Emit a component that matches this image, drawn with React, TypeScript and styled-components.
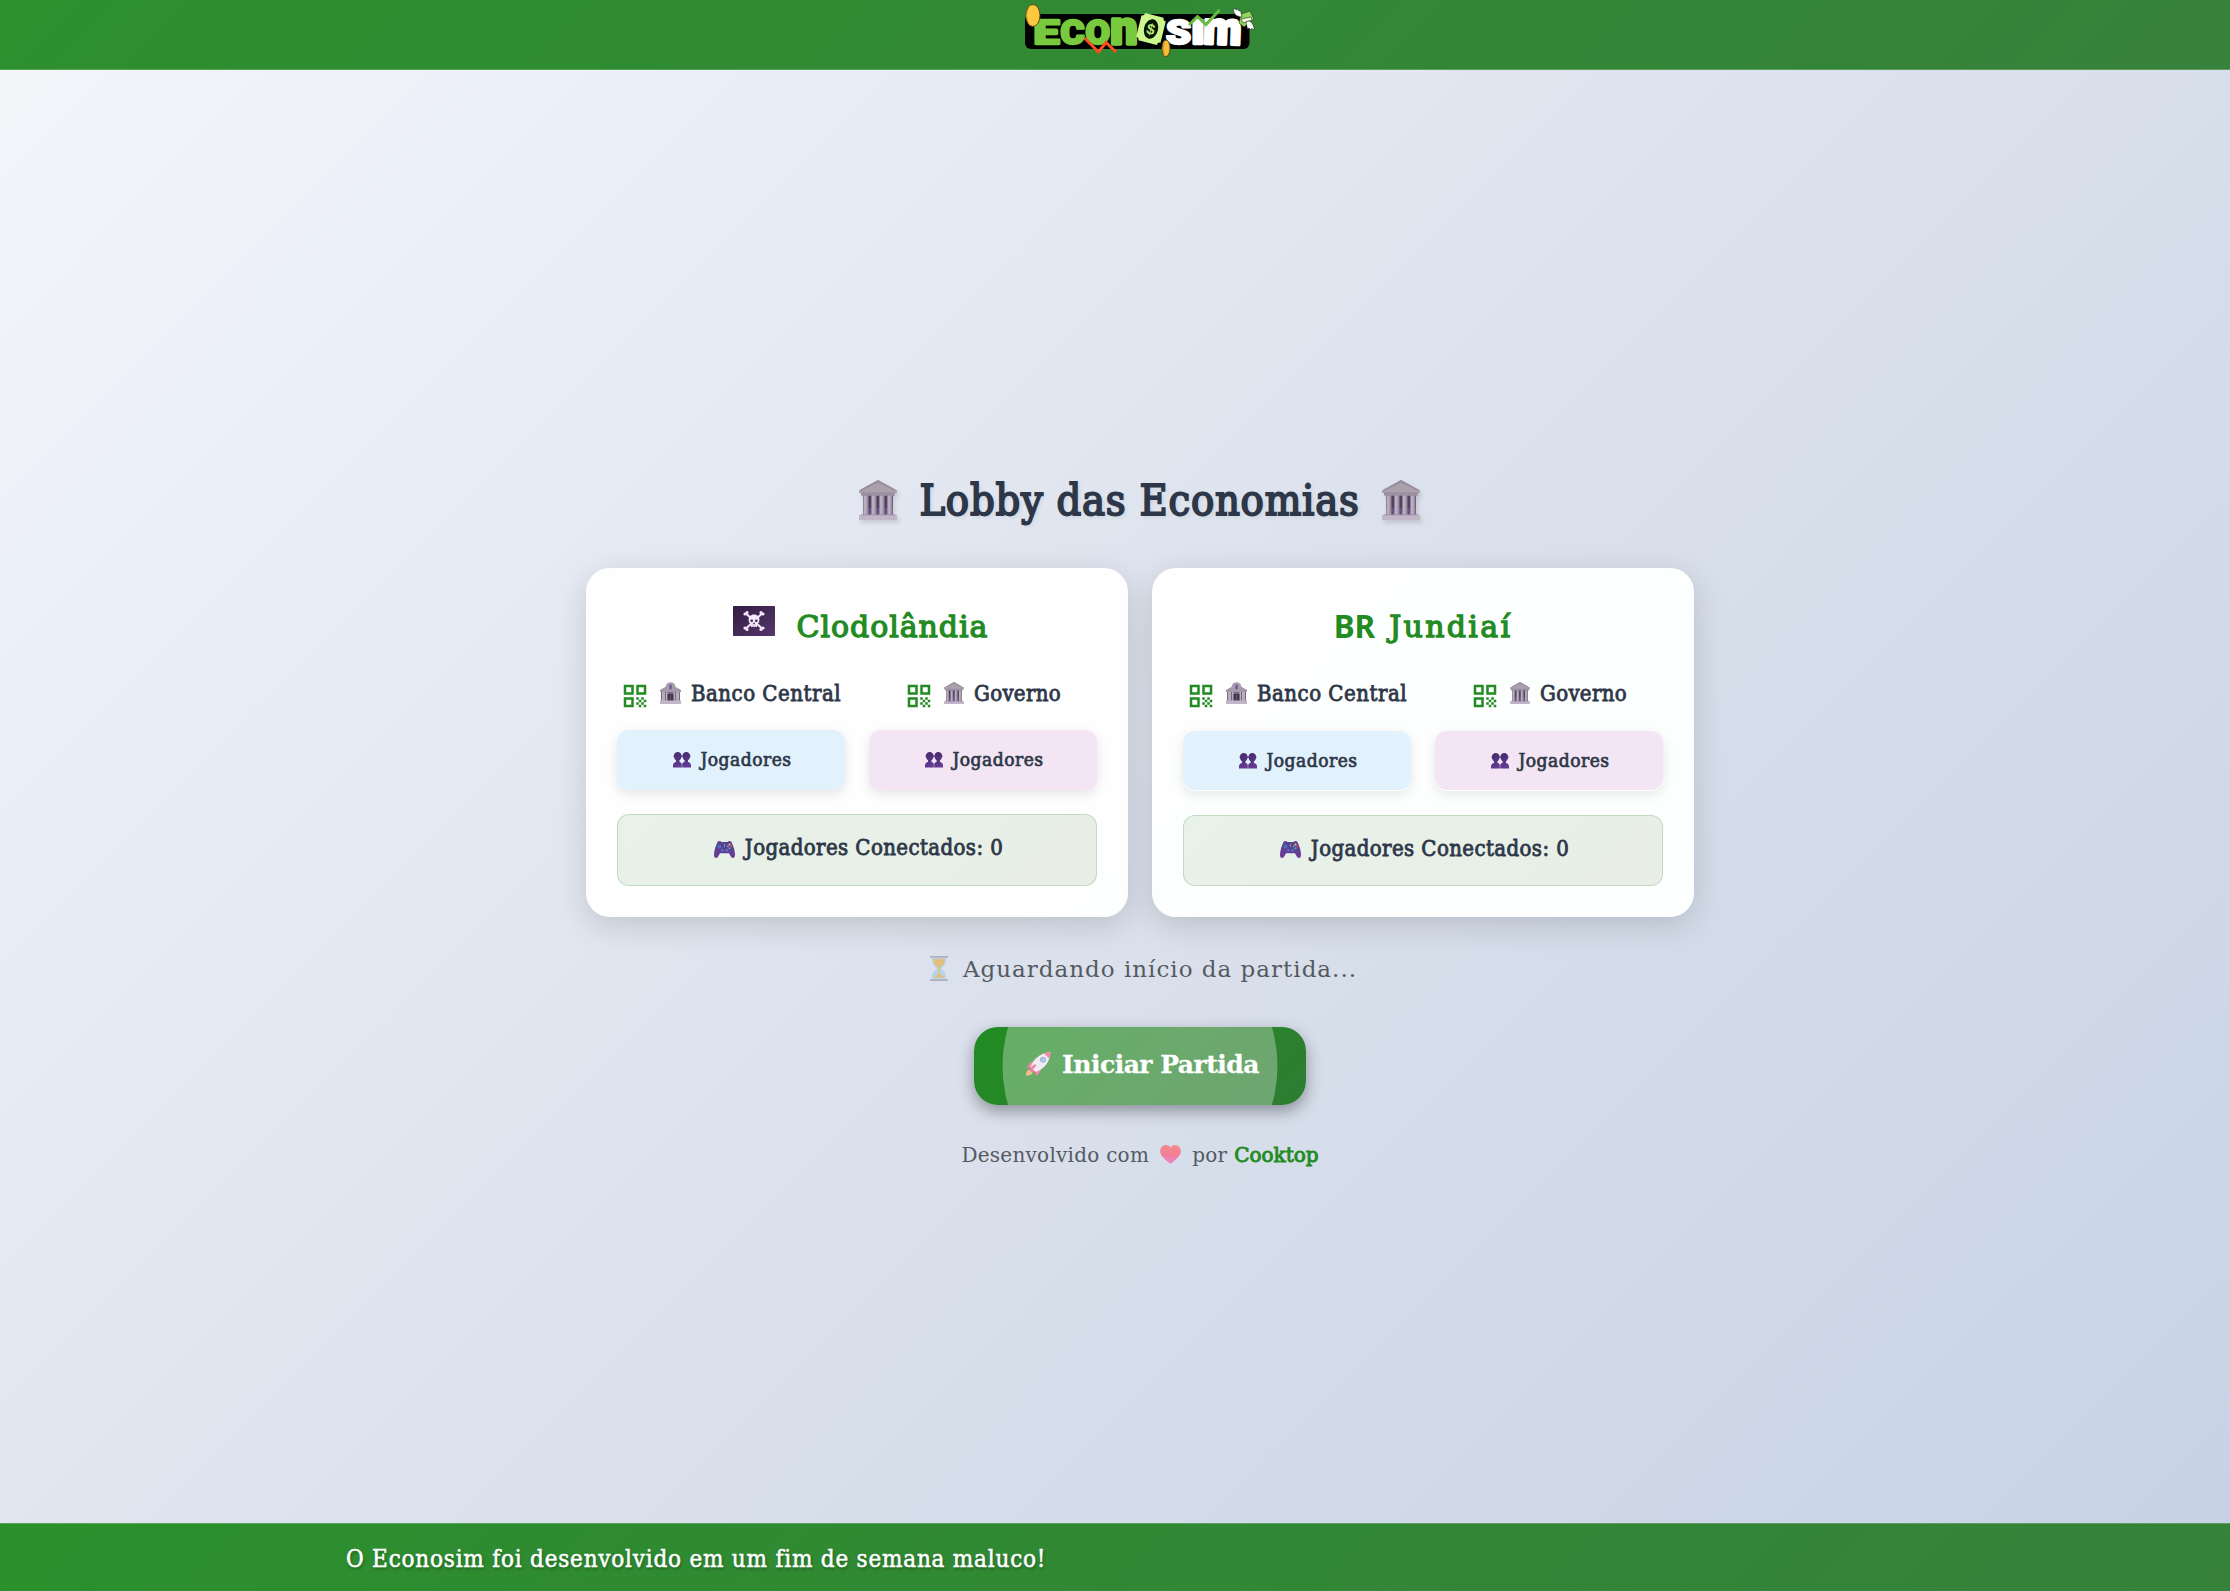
import React from "react";
import styled, { createGlobalStyle } from "styled-components";

const GlobalStyle = createGlobalStyle`
  * { box-sizing: border-box; }
  body {
    margin: 0;
    background: #dce3ee;
    font-family: "DejaVu Serif", "Liberation Serif", serif;
  }
`;

const Page = styled.div`
  display: flex;
  flex-direction: column;
  height: 1591px;
  background: linear-gradient(135deg, #f4f6f9 0%, #ebeff8 18%, #dce2ed 50%, #c6d2e4 100%);
`;

const barFill = "linear-gradient(135deg, rgba(34, 139, 34, 0.95), rgba(46, 125, 50, 0.95))";

const Header = styled.header`
  display: flex;
  justify-content: center;
  height: 70px;
  padding-left: 50px;
  background: ${barFill};
  border-bottom: 1px solid rgba(255, 255, 255, 0.2);
`;

const Main = styled.main`
  flex: 1;
  display: flex;
  flex-direction: column;
  align-items: center;
  padding: 401px 0 0 50px;
`;

const Footer = styled.footer`
  display: flex;
  align-items: center;
  height: 68px;
  padding: 2px 0 0 346px;
  background: ${barFill};
  border-top: 1px solid rgba(255, 255, 255, 0.2);
  color: #fff;
  text-shadow: 1px 2px 3px rgba(0, 0, 0, 0.35);
`;

const Type = styled.span<{
  $size: number;
  $spacing?: number;
  $ink?: number;
  $narrow?: boolean;
  $bold?: boolean;
}>`
  padding-top: 2px;
  font-family: ${(p) => (p.$narrow ? '"DejaVu Serif Condensed", ' : "")}"DejaVu Serif", serif;
  font-size: ${(p) => p.$size}px;
  font-weight: ${(p) => (p.$bold ? 700 : 400)};
  letter-spacing: ${(p) => p.$spacing ?? 0}px;
  -webkit-text-stroke: ${(p) => p.$ink ?? 0}px currentColor;
  line-height: 1.2;
  white-space: nowrap;
`;

const Title = styled.h1`
  display: flex;
  align-items: center;
  gap: 22px;
  height: 58px;
  margin: 0 0 39px;
  padding-right: 1px;
  color: #2d3748;
  text-shadow: 2px 2px 4px rgba(0, 0, 0, 0.1);

  svg {
    margin-bottom: 1px;
    filter: drop-shadow(2px 3px 2px rgba(0, 0, 0, 0.12));
  }
`;

const Cards = styled.div`
  display: flex;
  gap: 24px;
`;

const Card = styled.section`
  width: 542px;
  height: 349px;
  padding: 33px 31px 31px;
  border-radius: 24px;
  background: rgba(255, 255, 255, 0.95);
  box-shadow: 0 8px 32px rgba(0, 0, 0, 0.15);
`;

const CardTitle = styled.h2<{ $gap: number }>`
  display: flex;
  align-items: center;
  justify-content: center;
  gap: ${(p) => p.$gap}px;
  height: 50px;
  margin: 0 0 27px;
  color: #228b22;

  svg { margin: 0 0 10px 7px; }
`;

const FlagLetters = styled.span`
  font: 700 31.5px/1 "Noto Sans", "Open Sans", sans-serif;
`;

const Columns = styled.div`
  display: grid;
  grid-template-columns: 228px 228px;
  gap: 24px;
`;

const RoleRow = styled(Columns)<{ $low: boolean }>`
  margin-bottom: ${(p) => (p.$low ? 23 : 22)}px;
`;

const Role = styled.div`
  display: flex;
  align-items: center;
  justify-content: center;
  gap: 10px;
  height: 30px;
  padding-right: 1px;
  color: #2d3748;
`;

const QrIcon = styled.svg`
  width: 30px;
  height: 30px;
  margin-top: 5px;
  fill: #228b22;
  flex: none;
`;

const Players = styled.div<{ $tone: string; $low: boolean }>`
  display: flex;
  align-items: center;
  justify-content: center;
  gap: 9px;
  height: ${(p) => (p.$low ? 59 : 60)}px;
  padding: 0 0 3px 3px;
  border-radius: 12px;
  background: ${(p) => p.$tone};
  color: #2d3748;
  box-shadow: ${(p) => (p.$low ? "0 1px 0 #fff, " : "")}0 4px 12px rgba(0, 0, 0, 0.1);

  svg { margin-top: 3px; }
`;

const Connected = styled.div<{ $low: boolean }>`
  display: flex;
  align-items: center;
  justify-content: center;
  gap: 10px;
  height: ${(p) => (p.$low ? 71 : 72)}px;
  margin-top: ${(p) => (p.$low ? 25 : 24)}px;
  padding: 0 0 5px 3px;
  border: 1px solid rgba(34, 139, 34, 0.2);
  border-radius: 12px;
  background: linear-gradient(135deg, #e8f2e9, #e8eee6);
  color: #2d3748;

  svg { margin-top: 3px; }
`;

const Waiting = styled.p`
  display: flex;
  align-items: center;
  gap: 15px;
  height: 30px;
  margin: 37px 0 43px 7px;
  color: #555a60;

  svg { margin-bottom: 1px; }
`;

const StartButton = styled.button`
  position: relative;
  display: flex;
  align-items: center;
  justify-content: center;
  gap: 11px;
  width: 332px;
  height: 78px;
  padding: 0 0 5px 5px;
  overflow: hidden;
  border: 0;
  border-radius: 24px;
  background: linear-gradient(135deg, #228b22, #2e7d32);
  box-shadow: 0 6px 16px rgba(0, 0, 0, 0.36);
  color: #fff;

  &::after {
    content: "";
    position: absolute;
    top: 50%;
    left: 50%;
    width: 275px;
    height: 275px;
    border-radius: 50%;
    transform: translate(-50%, -50%);
    background: rgba(255, 255, 255, 0.31);
  }
`;

const Credits = styled.p`
  display: flex;
  align-items: center;
  gap: 11px;
  height: 30px;
  margin: 34px 0 0;
  color: #555a60;
`;

const Author = styled.span`
  margin-left: -4px;
  color: #228b22;
  display: flex;
`;

function Temple({ width, height }: { width: number; height: number }) {
  return (
    <svg width={width} height={height} viewBox="0 0 38 46" preserveAspectRatio="none">
      <rect x="4" y="15" width="30" height="27" fill="#51405f" />
      <rect x="4" y="32" width="30" height="10" fill="#694c80" />
      {[5, 13, 21, 29].map((x) => (
        <g key={x}>
          <rect x={x - 0.6} y="17" width="4.8" height="24" fill="#b9aebf" />
          <rect x={x + 2.6} y="17" width="1.6" height="24" fill="#998ca1" />
        </g>
      ))}
      <path d="M19 0 38 12v3H0v-3z" fill="#aaa1ac" />
      <path d="M19 0 38 12h-3L19 3 3 12H0z" fill="#978c9c" />
      <rect x="2" y="14" width="34" height="4" rx="1" fill="#9b90a1" />
      <rect x="0" y="40" width="38" height="6" rx="0.6" fill="#c0b6c8" />
      <path d="M2 40h34" stroke="#91869a" strokeWidth="0.8" />
    </svg>
  );
}

function Bank() {
  return (
    <svg width="21" height="22" viewBox="0 0 21 22">
      <path d="M1 7h19v12H1z" fill="#776b81" />
      <path d="M0 8 10.5 2 21 8v2H0z" fill="#a298a6" />
      <path d="M2 10h3v9H2zM16 10h3v9h-3zM6 10h1.6v9H6zM13.4 10H15v9h-1.6z" fill="#b8adbd" />
      <rect x="7.6" y="12" width="5.8" height="7" fill="#44364d" />
      <path d="M10.5 13v6" stroke="#786a80" strokeWidth="0.7" />
      <circle cx="10.5" cy="5" r="4.8" fill="#a79dab" />
      <rect x="9.4" y="2.4" width="2.3" height="5" rx="1" fill="#7052a0" />
      <path d="M0 18.5h21V22H0z" fill="#c0b6c8" />
    </svg>
  );
}

function PirateFlag() {
  return (
    <svg width="42" height="30" viewBox="0 0 42 30">
      <defs>
        <linearGradient id="flagCloth" x1="0" y1="0" x2="1" y2="1">
          <stop offset="0" stopColor="#321c43" />
          <stop offset="1" stopColor="#56376b" />
        </linearGradient>
      </defs>
      <rect width="42" height="30" rx="0.8" fill="url(#flagCloth)" />
      <g stroke="#f3e9fb" strokeWidth="2" fill="#f3e9fb">
        <path d="m13 7.500 16 15M29 7.500l-16 15" />
        <g stroke="none">
          <circle cx="12" cy="8" r="1.600" /><circle cx="14" cy="6.500" r="1.600" />
          <circle cx="30" cy="8" r="1.600" /><circle cx="28" cy="6.500" r="1.600" />
          <circle cx="12" cy="22" r="1.600" /><circle cx="14" cy="23.500" r="1.600" />
          <circle cx="30" cy="22" r="1.600" /><circle cx="28" cy="23.500" r="1.600" />
        </g>
      </g>
      <path d="M21 8.500c-3.600 0-5.400 2.400-5.400 5.500 0 2.200.9 3.200 2.300 4V21h6.200v-3c1.400-.8 2.300-1.800 2.300-4 0-3.100-1.800-5.500-5.400-5.500z" fill="#f3e9fb" />
      <circle cx="18.700" cy="14.800" r="1.300" fill="#3d244f" />
      <circle cx="23.300" cy="14.800" r="1.300" fill="#3d244f" />
      <path d="m21 16.500.8 1.600h-1.600zM19.800 19.500V21M22.200 19.500V21" fill="#3d244f" stroke="#3d244f" strokeWidth="0.400" />
    </svg>
  );
}

function Busts() {
  return (
    <svg width="18" height="16" viewBox="0 0 18 16">
      <defs>
        <linearGradient id="bust" x1="0" y1="0" x2="0.300" y2="1">
          <stop offset="0" stopColor="#432a66" />
          <stop offset="1" stopColor="#633a94" />
        </linearGradient>
      </defs>
      <g fill="url(#bust)">
        <path d="M4.700 0C2.700 0 1 1.300 1 3.200c-.7.100-.7 1.700.1 2 .2 1.400.9 2.400 1.900 3V10C1 10.400 0 11.700 0 13.500V15.500h8.800v-3c0-1.500-.9-2.200-2.300-2.500V8.200c1-.6 1.700-1.600 1.900-3 .8-.3.800-1.900.1-2C8.400 1.300 6.700 0 4.700 0z" />
        <path d="M13.300 0c-2 0-3.700 1.300-3.700 3.200-.7.100-.7 1.700.1 2 .2 1.400.9 2.400 1.900 3V10c-1.500.3-2.400 1-2.400 2.500v3H18v-2c0-1.800-1-3.100-3-3.500V8.200c1-.6 1.700-1.600 1.900-3 .8-.3.800-1.900.1-2 0-1.900-1.700-3.200-3.700-3.200z" />
      </g>
    </svg>
  );
}

function Gamepad() {
  return (
    <svg width="21" height="17" viewBox="0 0 21 17">
      <defs>
        <linearGradient id="pad" x1="0" y1="0" x2="0" y2="1">
          <stop offset="0" stopColor="#55458f" />
          <stop offset="1" stopColor="#6b3a98" />
        </linearGradient>
      </defs>
      <path d="M3.500 1C4.500-.2 6.500-.2 7.500 1h6c1-1.200 3-1.200 4 0C19.500 5 21 10 21 14c0 3.500-3 4-4.500 1L15 12.300H6L4.500 15C3 18 0 17.500 0 14 0 10 1.500 5 3.500 1z" fill="url(#pad)" />
      <circle cx="5.500" cy="5.500" r="1.900" fill="#4672b5" />
      <circle cx="8.300" cy="9.300" r="1.300" fill="#4a7bd0" />
      <circle cx="12.700" cy="9.300" r="1.300" fill="#4a7bd0" />
      <path d="M10.500 3v3" stroke="#8f87d0" />
      <circle cx="15.500" cy="3.500" r="1" fill="#f5cf41" />
      <circle cx="17.300" cy="5.300" r="1" fill="#ee4865" />
      <circle cx="13.800" cy="5.300" r="1" fill="#4ba0f0" />
      <circle cx="15.500" cy="7.200" r="1" fill="#43c46b" />
    </svg>
  );
}

function Hourglass() {
  return (
    <svg width="18" height="25" viewBox="0 0 18 25">
      <path d="M2 2c0 6 1.500 7.500 5 10.500C3.500 15.500 2 17 2 23h14c0-6-1.500-7.500-5-10.500C14.500 9.500 16 8 16 2z" fill="#b4d4ec" />
      <path d="M3.200 3h11.600c0 4.500-1.700 6-5 8.600V18c2 .8 3.300 1.800 3.700 3.800h-9c.4-2 1.700-3 3.700-3.800v-6.400C4.900 9 3.200 7.500 3.200 3z" fill="#e4bf7c" />
      <path d="M0 0h18v1.800H0zM0 23.200h18V25H0z" fill="#b0aeb7" />
    </svg>
  );
}

function Rocket() {
  return (
    <svg width="25" height="24" viewBox="0 0 25 24">
      <path d="M0 23.500c0-3 .8-5.500 3.500-6l3.200 3C6 23 3 23.500 0 23.500z" fill="#f5a04c" />
      <path d="M8.500 9.500C4.500 9.500 2 12 1.500 16l5-1.500zM15 15.500c.2 4-2 6.500-5 8.500l-.8-5.500z" fill="#f04f85" />
      <path d="M4.500 15.500C7 7.500 13.500 1 24.500 0 24 10.500 17.500 17.500 9.500 20z" fill="#ebe3f0" />
      <path d="M18 1.500C20 .6 22 .2 24.500 0c0 2.500-.5 4.500-1.400 6.500z" fill="#f0527a" />
      <circle cx="17" cy="7.800" r="3" fill="#8c87a8" />
      <circle cx="17" cy="7.800" r="2.300" fill="#72b4f8" />
      <path d="m4 18 5-4.500" stroke="#f04f85" strokeWidth="2.400" strokeLinecap="round" />
      <path d="m4.500 15.500 5 4.500-3 .6-2.500-2.500z" fill="#e94080" />
    </svg>
  );
}

function Heart() {
  return (
    <svg width="21" height="19" viewBox="0 0 21 19">
      <defs>
        <linearGradient id="heart" x1="0" y1="0" x2="0" y2="1">
          <stop offset="0" stopColor="#f38b90" />
          <stop offset="0.5" stopColor="#f27f93" />
          <stop offset="1" stopColor="#ee82d4" />
        </linearGradient>
      </defs>
      <path d="M10.500 2.400C12.500-.6 16-.5 18.500 1.300c2.500 2 3.200 5.700 1.300 8.700-2 3.200-5.500 6-9.300 9-3.800-3-7.300-5.800-9.300-9C-.7 7 0 3.300 2.500 1.300 5-.5 8.500-.6 10.500 2.400z" fill="url(#heart)" />
    </svg>
  );
}

function QrCode() {
  return (
    <QrIcon viewBox="0 0 24 24">
      <path d="M3 11h8V3H3zm2-6h4v4H5zM3 21h8v-8H3zm2-6h4v4H5zm8-12v8h8V3zm6 6h-4V5h4zm0 10h2v2h-2zm-6-6h2v2h-2zm2 2h2v2h-2zm-2 2h2v2h-2zm2 2h2v2h-2zm2-2h2v2h-2zm0-4h2v2h-2zm2 2h2v2h-2z" />
    </QrIcon>
  );
}

const LogoMark = styled.svg`
  overflow: visible;
`;

const Letter = styled.text`
  font-family: Roboto, "Open Sans", sans-serif;
  font-weight: 900;
  stroke-width: 2.4px;
  stroke-linejoin: round;
`;

interface LogoLetterProps {
  x: number;
  w: number;
  color: string;
  tall?: number;
  turn?: number;
  children: string;
}

function LogoLetter({ x, w, color, tall = 1, turn = 0, children }: LogoLetterProps) {
  return (
    <Letter
      fontSize={34}
      textLength={w}
      lengthAdjust="spacingAndGlyphs"
      fill={color}
      stroke={color}
      transform={`translate(${x} 43.5) rotate(${turn}) scale(1 ${tall})`}
    >
      {children}
    </Letter>
  );
}

function Logo() {
  return (
    <LogoMark width="240" height="69" viewBox="0 0 240 69">
      <rect x="5" y="14" width="224.500" height="35" rx="6" fill="#000" />
      <LogoLetter x={13.5} w={26} color="#78c93e">E</LogoLetter>
      <LogoLetter x={40.5} w={24} color="#78c93e">C</LogoLetter>
      <LogoLetter x={65.5} w={24.5} color="#78c93e">O</LogoLetter>
      <LogoLetter x={90.5} w={27} color="#78c93e" tall={1.36}>n</LogoLetter>
      <LogoLetter x={146} w={25} color="#fff">S</LogoLetter>
      <LogoLetter x={171} w={14} color="#fff">I</LogoLetter>
      <LogoLetter x={183} w={38} color="#fff" tall={1.34} turn={2}>m</LogoLetter>
      <g transform="rotate(14 131 29)">
        <path d="M118.500 18q3 0 3-3h19q0 3 3 3v22q-3 0-3 3h-19q0-3-3-3z" fill="#cdf78e" />
        <ellipse cx="131" cy="29" rx="7" ry="10" fill="#0a1405" />
        <text x="131" y="34.500" textAnchor="middle" fontFamily="Liberation Sans" fontWeight="700" fontSize="15" fill="#b5ea75">$</text>
      </g>
      <ellipse cx="13" cy="15.500" rx="7" ry="11" fill="#fdc93f" stroke="#5c4815" />
      <path d="M10 5.500q-7 10 0 20" fill="none" stroke="#dd9b27" />
      <ellipse cx="146" cy="48.300" rx="4" ry="8.300" fill="#f9bd39" stroke="#5c4815" />
      <path d="M144.500 41q-3 7 0 15" fill="none" stroke="#d88f24" />
      <path d="m64.500 38 14 14 7.500-9.500 10 9.500" fill="none" stroke="#f8511f" strokeWidth="3" />
      <path d="m169 25 8.500-8.500 8.500 8 13.500-14.500" fill="none" stroke="#65bd3d" strokeWidth="3" />
      <g stroke="#213019" strokeWidth="0.600">
        <path d="m221 14 9-3 4 8-10 8-5-4z" fill="#8fd45c" />
        <path d="m221 19 10-2 1 3-9 3z" fill="#f1f6df" />
        <path d="M222 17c-6 0-9-4-8.500-9l3 2 .5-1.500 2 2.500 1.500-.5z" fill="#fff" />
        <path d="M226 22c3-2 7-1 8.500 8l-3-1.500-.5 1.500-2-2-1.500 1z" fill="#fff" />
      </g>
    </LogoMark>
  );
}

interface Economy {
  name: string;
  flag?: string;
  spacing: number;
  low: boolean;
}

const economies: Economy[] = [
  { name: "Clodolândia", spacing: 0.95, low: false },
  { name: "Jundiaí", flag: "BR", spacing: 2.3, low: true },
];

function EconomyCard({ name, flag, spacing, low }: Economy) {
  return (
    <Card>
      <CardTitle $gap={flag ? 14 : 22}>
        {flag ? <FlagLetters>{flag}</FlagLetters> : <PirateFlag />}
        <Type $size={30} $spacing={spacing} $ink={1.3}>{name}</Type>
      </CardTitle>
      <RoleRow $low={low}>
        <Role>
          <QrCode />
          <Bank />
          <Type $size={22} $spacing={0.5} $ink={0.8} $narrow>Banco Central</Type>
        </Role>
        <Role>
          <QrCode />
          <Temple width={20} height={22} />
          <Type $size={22} $spacing={0.3} $ink={0.8} $narrow>Governo</Type>
        </Role>
      </RoleRow>
      <Columns>
        {["#e2f2fd", "#f3e5f4"].map((tone) => (
          <Players key={tone} $tone={tone} $low={low}>
            <Busts />
            <Type $size={19} $spacing={0.5} $ink={0.7} $narrow>Jogadores</Type>
          </Players>
        ))}
      </Columns>
      <Connected $low={low}>
        <Gamepad />
        <Type $size={22} $spacing={0.4} $ink={0.8} $narrow>Jogadores Conectados: 0</Type>
      </Connected>
    </Card>
  );
}

export default function App() {
  return (
    <Page>
      <GlobalStyle />
      <Header><Logo /></Header>
      <Main>
        <Title>
          <Temple width={38} height={40} />
          <Type $size={43} $spacing={0.75} $ink={1.8} $narrow>Lobby das Economias</Type>
          <Temple width={38} height={40} />
        </Title>
        <Cards>
          {economies.map((e) => <EconomyCard key={e.name} {...e} />)}
        </Cards>
        <Waiting>
          <Hourglass />
          <Type $size={23} $spacing={1}>Aguardando início da partida...</Type>
        </Waiting>
        <StartButton>
          <Rocket />
          <Type $size={25} $spacing={-0.5} $ink={0.3} $bold>Iniciar Partida</Type>
        </StartButton>
        <Credits>
          <Type $size={20} $spacing={0.25}>Desenvolvido com</Type>
          <Heart />
          <Type $size={20} $spacing={0.2}>por</Type>
          <Author><Type $size={20} $ink={0.9}>Cooktop</Type></Author>
        </Credits>
      </Main>
      <Footer>
        <Type $size={24} $spacing={0.78} $ink={0.5} $narrow>
          O Econosim foi desenvolvido em um fim de semana maluco!
        </Type>
      </Footer>
    </Page>
  );
}
